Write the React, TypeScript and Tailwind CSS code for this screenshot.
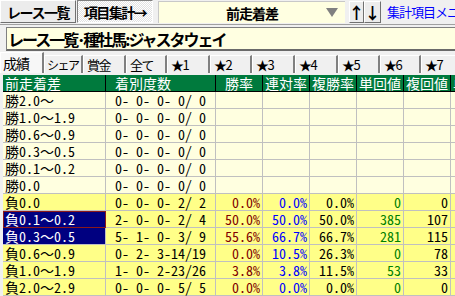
import React from "react";

const ui = { fontFamily: '"Noto Sans CJK JP", "Noto Sans", sans-serif' };
const mono = { fontFamily: '"Noto Sans Mono CJK JP", "Noto Sans CJK JP", "DejaVu Sans Mono", monospace' };

type Row = {
  label: string;
  counts: string;
  win?: string;
  ren?: string;
  fuku?: string;
  tan?: string;
  fk?: string;
  strong?: boolean;
  sel?: "focus" | "sel";
};

const rows: Row[] = [
  { label: "勝2.0〜", counts: "0- 0- 0- 0/ 0" },
  { label: "勝1.0〜1.9", counts: "0- 0- 0- 0/ 0" },
  { label: "勝0.6〜0.9", counts: "0- 0- 0- 0/ 0" },
  { label: "勝0.3〜0.5", counts: "0- 0- 0- 0/ 0" },
  { label: "勝0.1〜0.2", counts: "0- 0- 0- 0/ 0" },
  { label: "勝0.0", counts: "0- 0- 0- 0/ 0" },
  { label: "負0.0", counts: "0- 0- 0- 2/ 2", win: "0.0%", ren: "0.0%", fuku: "0.0%", tan: "0", fk: "0", strong: true },
  { label: "負0.1〜0.2", counts: "2- 0- 0- 2/ 4", win: "50.0%", ren: "50.0%", fuku: "50.0%", tan: "385", fk: "107", strong: true, sel: "focus" },
  { label: "負0.3〜0.5", counts: "5- 1- 0- 3/ 9", win: "55.6%", ren: "66.7%", fuku: "66.7%", tan: "281", fk: "115", strong: true, sel: "sel" },
  { label: "負0.6〜0.9", counts: "0- 2- 3-14/19", win: "0.0%", ren: "10.5%", fuku: "26.3%", tan: "0", fk: "78", strong: true },
  { label: "負1.0〜1.9", counts: "1- 0- 2-23/26", win: "3.8%", ren: "3.8%", fuku: "11.5%", tan: "53", fk: "33", strong: true },
  { label: "負2.0〜2.9", counts: "0- 0- 0- 5/ 5", win: "0.0%", ren: "0.0%", fuku: "0.0%", tan: "0", fk: "0", strong: true },
];

const tabs = ["成績", "シェア", "賞金", "全て", "★1", "★2", "★3", "★4", "★5", "★6", "★7"];
const tabW = [44, 39, 43, 41, 43, 42, 43, 43, 42, 41, 43];

function Tab({ label, w, active }: { label: string; w: number; active?: boolean }) {
  const small = label === "シェア";
  return (
    <div
      style={{ width: w }}
      className={
        active
          ? "h-[21px] shrink-0 whitespace-nowrap flex items-center pl-[2px] text-[14px] leading-[16px] tracking-[-1px] text-black bg-[#f7f7f7] border-l border-t border-white border-r-2 border-r-[#808080]"
          : small
          ? "h-[18px] shrink-0 whitespace-nowrap flex items-center pl-[2px] text-[12px] leading-[16px] tracking-[-1.5px] text-black bg-[#f0f0f0] border-l border-t border-white border-r-2 border-r-[#808080]"
          : "h-[18px] shrink-0 whitespace-nowrap flex items-center pl-[3px] text-[13px] leading-[16px] tracking-[-1.5px] text-black bg-[#f0f0f0] border-l border-t border-white border-r-2 border-r-[#808080]"
      }
    >
      {label}
    </div>
  );
}

export default function App() {
  return (
    <div className="w-[455px] h-[296px] overflow-hidden bg-[#f0f0f0] text-black" style={ui}>
      {/* top bar */}
      <div className="h-[25px] flex items-start border-b border-[#a0a0a0]">
        <div className="w-[76px] h-[23px] shrink-0 whitespace-nowrap flex items-center justify-center text-[14px] tracking-[-1.5px] font-bold leading-[18px] bg-[#ececec] border border-t-white border-l-white border-r-[#707070] border-b-[#707070]">
          レース一覧
        </div>
        <div className="ml-[1px] w-[76px] h-[23px] shrink-0 whitespace-nowrap flex items-center justify-center text-[14px] tracking-[-1.5px] font-bold leading-[18px] bg-[repeating-conic-gradient(#ffffff_0_25%,#e2e2e2_0_50%)] bg-[length:2px_2px] border border-t-[#808080] border-l-[#808080] border-r-white border-b-white">
          項目集計→
        </div>
        <div className="ml-[5px] mt-[1px] w-[187px] h-[22px] shrink-0 relative flex items-center justify-center bg-[#ffffe1] border-l border-t border-[#c8c8c8]">
          <span className="text-[14px] tracking-[-1px] font-bold leading-[18px] whitespace-nowrap">前走着差</span>
          <span className="absolute right-[7px] top-[6px] w-0 h-0 border-l-[6px] border-r-[6px] border-t-[9px] border-l-transparent border-r-transparent border-t-[#808080]" />
        </div>
        <div className="ml-[4px] mt-[1px] w-[15px] h-[22px] shrink-0 flex items-center justify-center text-[16px] font-bold leading-[18px] bg-[#ececec] border border-t-white border-l-white border-r-[#707070] border-b-[#707070]">
          ↑
        </div>
        <div className="w-[17px] mt-[1px] h-[22px] shrink-0 flex items-center justify-center text-[16px] font-bold leading-[18px] bg-[#ececec] border border-t-white border-l-white border-r-[#707070] border-b-[#707070]">
          ↓
        </div>
        <div className="ml-[6px] mt-[4px] whitespace-nowrap text-[13px] leading-[15px] tracking-[-1px] text-[#0000ff]">
          集計項目メニュー
        </div>
      </div>

      {/* title */}
      <div className="ml-[6px] mt-[2px] h-[24px] flex items-center pl-[1px] bg-[#ffffe1] border-l border-t border-[#808080] border-b-2 border-b-[#6a6a6a]">
        <span className="text-[16px] font-bold leading-[18px] whitespace-nowrap tracking-[-2px]">
          レース一覧･種牡馬:ジャスタウェイ
        </span>
      </div>

      {/* tabs */}
      <div className="mt-[1px] h-[21px] flex items-end">
        {tabs.map((t, i) => (
          <Tab key={t} label={t} w={tabW[i]} active={i === 0} />
        ))}
      </div>

      {/* table */}
      <div className="mt-[2px] ml-[3px] text-[14px]" style={mono}>
        <div className="h-[17px] flex bg-[#007a3d] text-white border-b border-black leading-[16px] whitespace-nowrap">
          <div className="w-[103px] shrink-0 border-r border-black pl-[2px]">前走着差</div>
          <div className="w-[110px] shrink-0 border-r border-black pl-[9px]">着別度数</div>
          <div className="w-[47px] shrink-0 border-r border-black text-center">勝率</div>
          <div className="w-[47px] shrink-0 border-r border-black text-center">連対率</div>
          <div className="w-[47px] shrink-0 border-r border-black text-center">複勝率</div>
          <div className="w-[47px] shrink-0 border-r border-black text-center">単回値</div>
          <div className="w-[47px] shrink-0 border-r border-black text-center">複回値</div>
          <div className="w-[60px] shrink-0 pl-[2px]">単勝率</div>
        </div>
        {rows.map((r) => {
          const bg = r.strong ? "bg-[#ffff88]" : "bg-[#ffffe0]";
          const first =
            r.sel === "focus"
              ? "bg-[#000080] text-white outline outline-1 -outline-offset-1 outline-[#8b1a1a]"
              : r.sel === "sel"
              ? "bg-[#000080] text-white"
              : "";
          return (
            <div key={r.label} className={`h-[17px] flex leading-[16px] whitespace-pre ${bg}`}>
              <div className={`w-[103px] shrink-0 border-r border-b border-[#c0c0c0] pl-[2px] ${first}`}>{r.label}</div>
              <div className="w-[110px] shrink-0 border-r border-b border-[#c0c0c0] pl-[9px]">{r.counts}</div>
              <div className="w-[47px] shrink-0 border-r border-b border-[#c0c0c0] text-right pr-[2px] text-[#800000]">{r.win ?? ""}</div>
              <div className="w-[47px] shrink-0 border-r border-b border-[#c0c0c0] text-right pr-[2px] text-[#0000ff]">{r.ren ?? ""}</div>
              <div className="w-[47px] shrink-0 border-r border-b border-[#c0c0c0] text-right pr-[2px] text-black">{r.fuku ?? ""}</div>
              <div className="w-[47px] shrink-0 border-r border-b border-[#c0c0c0] text-right pr-[2px] text-[#008000]">{r.tan ?? ""}</div>
              <div className="w-[47px] shrink-0 border-r border-b border-[#c0c0c0] text-right pr-[2px] text-black">{r.fk ?? ""}</div>
              <div className="w-[60px] shrink-0 border-b border-[#c0c0c0]"></div>
            </div>
          );
        })}
      </div>
    </div>
  );
}
